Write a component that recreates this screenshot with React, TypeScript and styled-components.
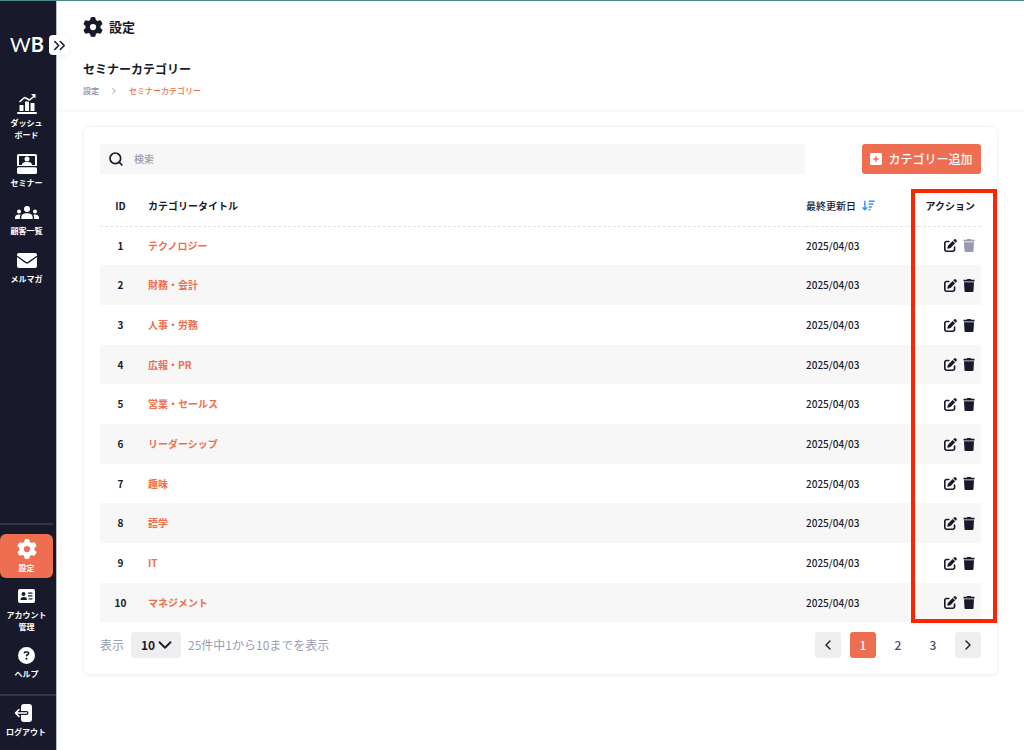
import React from "react";
import styled, { createGlobalStyle, css } from "styled-components";
import { ChevronDown, ChevronLeft, ChevronRight, ChevronsRight, Search } from "lucide-react";
import {
  FaArrowDownWideShort,
  FaCircleQuestion,
  FaGear,
  FaPenToSquare,
} from "react-icons/fa6";

const navy = "#181a2c";
const coral = "#ed6e50";
const muted = "#9a9db3";
const panel = "#f7f7f7";

const GlobalStyle = createGlobalStyle`
  *, *::before, *::after { box-sizing: border-box; }
  body {
    margin: 0;
    background: #fff;
    color: ${navy};
    font-family: "Noto Sans CJK JP", sans-serif;
    font-size: 10px;
    line-height: 12px;
  }
  button, input, select { font: inherit; color: inherit; border: 0; margin: 0; }
  button { cursor: pointer; padding: 0; }
  a { color: inherit; text-decoration: none; }
  h1, h2, ul, ol { margin: 0; padding: 0; list-style: none; }
  svg { display: block; flex: none; }
`;

const Shell = styled.div`
  display: flex;
  min-height: 100vh;
  border-top: 1px solid #4f8a8c;
`;

const Sidebar = styled.aside`
  position: relative;
  display: flex;
  flex-direction: column;
  width: 57px;
  flex: none;
  background: ${navy};
  border-right: 1px solid #b9bcc6;
  color: #fff;
`;

const Logo = styled.a`
  display: block;
  margin: 31px 0 0 10px;
  font: 400 20px/24px Lato, sans-serif;
  b { font-weight: 700; }
`;

const Expand = styled.button`
  position: absolute;
  top: 34px;
  left: 49px;
  display: grid;
  place-items: center;
  width: 20px;
  height: 20px;
  border-radius: 4px;
  background: #fff;
  color: ${navy};
  box-shadow: 0 1px 4px rgba(24, 26, 44, 0.08);
`;

const NavList = styled.ul`
  display: flex;
  flex-direction: column;
  width: 53px;
`;

const MainNav = styled(NavList)`
  gap: 4px;
  margin-top: 33px;
`;

const LowerNav = styled(NavList)`
  gap: 3px;
  margin-top: auto;
  padding: 9px 0 10px;
  border-top: 2px solid #31344a;
`;

const LogoutArea = styled.div`
  border-top: 2px solid #31344a;
  padding: 2px 4px 8px 0;
`;

const NavLink = styled.a<{ $active?: boolean }>`
  display: flex;
  flex-direction: column;
  align-items: center;
  gap: 2px;
  padding: 4px 0;
  border-radius: 6px;
  font-size: 8px;
  font-weight: 700;
  text-align: center;
  white-space: pre-line;
  ${(p) => p.$active && css` background: ${coral}; `}
`;

const NavIcon = styled.span`
  display: grid;
  place-items: center;
  height: 22px;
`;

const Content = styled.div`
  flex: 1;
  min-width: 0;
`;

const Header = styled.header`
  padding: 16px 26px 13px;
  box-shadow: 0 1px 3px rgba(0, 0, 0, 0.06);
`;

const PageTitle = styled.h1`
  display: flex;
  align-items: center;
  gap: 6px;
  font-size: 13px;
  line-height: 20px;
`;

const SectionTitle = styled.h2`
  margin-top: 24px;
  font-size: 12px;
  line-height: 16px;
`;

const Crumbs = styled.ol`
  display: flex;
  align-items: center;
  gap: 10px;
  margin-top: 8px;
  font-size: 8px;
  font-weight: 500;
  line-height: 12px;
  color: #8688a0;
  [aria-current] { color: ${coral}; }
`;

const Card = styled.main`
  margin: 16px 26px 24px;
  padding: 17px 16px 16px;
  border: 1px solid #f3f3f3;
  border-radius: 6px;
  box-shadow: 0 1px 3px rgba(0, 0, 0, 0.06);
`;

const Toolbar = styled.div`
  display: flex;
  justify-content: space-between;
  gap: 57px;
`;

const SearchBox = styled.label`
  display: flex;
  align-items: center;
  flex: 1;
  gap: 10px;
  height: 30px;
  padding: 0 8px;
  background: ${panel};
  border-radius: 2px;
  input {
    flex: 1;
    min-width: 0;
    padding: 0;
    background: none;
    outline: 0;
    font-weight: 500;
  }
  input::placeholder { color: ${muted}; opacity: 1; }
`;

const AddButton = styled.button`
  display: flex;
  align-items: center;
  justify-content: center;
  gap: 6px;
  width: 119px;
  height: 30px;
  border-radius: 3px;
  background: ${coral};
  color: #fff;
  font-size: 12px;
  font-weight: 500;
`;

const TableWrap = styled.div`
  position: relative;
`;

const Table = styled.table`
  width: 100%;
  margin-top: 12px;
  border-collapse: collapse;
  table-layout: fixed;
  th, td { height: 40px; padding: 0; text-align: left; font-weight: 700; }
  th { border-bottom: 1px dashed #e4e4e4; }
  tbody tr:nth-child(3n + 1) td { height: 39px; }
  tbody tr:nth-child(even) { background: ${panel}; }
`;

const IdCol = styled.col` width: 48px; `;
const DateCol = styled.col` width: 112px; `;
const ActionCol = styled.col` width: 63px; `;

const IdCell = styled.td`
  && { padding-right: 7px; text-align: center; }
`;

const DateCell = styled.td`
  && { font-weight: 500; }
`;

const ActionHead = styled.th`
  && { padding-right: 6px; text-align: right; }
`;

const TitleLink = styled.a`
  color: ${coral};
`;

const SortButton = styled.button`
  display: flex;
  align-items: center;
  gap: 6px;
  background: none;
  font-weight: 500;
  svg { color: #2f94f5; }
`;

const Actions = styled.div`
  display: flex;
  align-items: center;
  justify-content: flex-end;
  gap: 6px;
  padding-right: 6px;
`;

const IconButton = styled.button`
  background: none;
  color: ${navy};
  &:disabled { color: #989bb0; }
`;

const Highlight = styled.div`
  position: absolute;
  top: 3px;
  right: -16px;
  bottom: -1px;
  width: 86px;
  border: 4px solid #ff2400;
  pointer-events: none;
`;

const Footer = styled.footer`
  display: flex;
  align-items: center;
  gap: 7px;
  margin-top: 10px;
  color: ${muted};
  font-size: 12px;
`;

const SizePicker = styled.span`
  display: grid;
  align-items: center;
  width: 50px;
  height: 26px;
  background: #eee;
  border-radius: 3px;
  color: ${navy};
  select, svg { grid-area: 1 / 1; }
  select {
    width: 100%;
    height: 26px;
    padding: 0 0 0 10px;
    appearance: none;
    background: none;
    font-weight: 700;
  }
  svg { justify-self: end; margin-right: 5px; pointer-events: none; }
`;

const Pager = styled.nav`
  display: flex;
  gap: 9px;
  margin-left: auto;
`;

const PageButton = styled.button<{ $kind?: "current" | "arrow" }>`
  display: grid;
  place-items: center;
  width: 26px;
  height: 26px;
  border-radius: 3px;
  font-size: 12px;
  font-weight: 500;
  background: ${(p) => (p.$kind === "current" ? coral : p.$kind === "arrow" ? "#eee" : "none")};
  color: ${(p) => (p.$kind === "current" ? "#fff" : p.$kind === "arrow" ? navy : "#4a4d66")};
`;

const ChartIcon = () => (
  <svg width="20" height="20" viewBox="0 0 20 20" fill="currentColor">
    <rect x="0" y="18" width="20" height="2" rx="1" />
    <rect x="2.500" y="11" width="4" height="6" rx=".5" />
    <rect x="8" y="7.500" width="4" height="9.500" rx=".5" />
    <rect x="13.500" y="9" width="4" height="8" rx=".5" />
    <path d="M2.500 8l5-4.500 5 2.500 5-4" fill="none" stroke="currentColor" strokeWidth="1.600" strokeLinejoin="round" />
    <path d="M14 0h4.500v4.500z" />
  </svg>
);

const SeminarIcon = () => (
  <svg width="20" height="20" viewBox="0 0 20 20" fill="currentColor">
    <path d="M1.500 0h17A1.500 1.500 0 0 1 20 1.500V12H0V1.500A1.500 1.500 0 0 1 1.500 0zM2 2v9h3c0-2 2-3 5-3s5 1 5 3h3V2z" fillRule="evenodd" />
    <circle cx="10" cy="5" r="2.500" />
    <path d="M5 12c0-3 2-4 5-4s5 1 5 4zM1.500 13.300h17A1.500 1.500 0 0 1 20 14.800v3.700a1.500 1.500 0 0 1-1.500 1.500h-17A1.500 1.500 0 0 1 0 18.500v-3.700a1.500 1.500 0 0 1 1.500-1.500z" />
  </svg>
);

const UsersIcon = () => (
  <svg width="24" height="13" viewBox="0 0 24 13" fill="currentColor">
    <circle cx="12" cy="3" r="3" />
    <circle cx="4" cy="5.500" r="2" />
    <circle cx="20" cy="5.500" r="2" />
    <path d="M6.300 13v-1.500C6.300 8.500 9 7.300 12 7.300s5.700 1.200 5.700 4.200V13zM0 13v-1.200c0-2.200 1.800-3.300 4-3.300.7 0 1.200.1 1.700.3-.5.800-.8 1.700-.8 2.700V13zM24 13v-1.200c0-2.200-1.800-3.300-4-3.300-.7 0-1.200.1-1.700.3.500.8.8 1.700.8 2.700V13z" />
  </svg>
);

const MailIcon = () => (
  <svg width="20" height="15" viewBox="0 0 20 15">
    <rect width="20" height="15" rx="2" fill="currentColor" />
    <path d="M0 3.200l8.600 6.200a2.400 2.400 0 0 0 2.800 0L20 3.200" fill="none" stroke={navy} strokeWidth="1.300" />
  </svg>
);

const AccountIcon = () => (
  <svg width="17" height="14" viewBox="0 0 17 14" fill="currentColor">
    <path
      fillRule="evenodd"
      d="M2 0h13a2 2 0 0 1 2 2v10a2 2 0 0 1-2 2H2a2 2 0 0 1-2-2V2a2 2 0 0 1 2-2zM5.500 3a2 2 0 1 0 0 4 2 2 0 0 0 0-4zM2.500 11h6.500c0-2-1-3-3.250-3S2.500 9 2.500 11zM10 3.500v1.300h4.500V3.500zM10 6.300v1.300h4.500V6.300zM10.500 9.200v1.300h4V9.200z"
    />
  </svg>
);

const LogoutIcon = () => (
  <svg width="24" height="18" viewBox="0 0 24 18" fill="none">
    <rect x="7" y="0" width="11" height="18" rx="3" fill="currentColor" />
    <path d="M5 5.500L1.500 9 5 12.500M2 9h10.500" stroke={navy} strokeWidth="4" strokeLinecap="round" />
    <path d="M5 5.500L1.500 9 5 12.500M2 9h10.500" stroke="currentColor" strokeWidth="1.600" strokeLinecap="round" strokeLinejoin="round" />
  </svg>
);

const PlusIcon = () => (
  <svg width="12" height="12" viewBox="0 0 12 12">
    <rect width="12" height="12" rx="1.500" fill="currentColor" />
    <path d="M6 3.300v5.400M3.300 6h5.400" stroke={coral} strokeWidth="1.400" />
  </svg>
);

const TrashIcon = () => (
  <svg width="12" height="13" viewBox="0 0 12 13" fill="currentColor">
    <path d="M.5.800h3.200L4.300 0h3.400l.6.800h3.200v1.700H.5zM1 3.300h10l-.5 8.700a1 1 0 0 1-1 1h-7a1 1 0 0 1-1-1z" />
  </svg>
);

const mainItems = [
  { label: "ダッシュ\nボード", icon: <ChartIcon /> },
  { label: "セミナー", icon: <SeminarIcon /> },
  { label: "顧客一覧", icon: <UsersIcon /> },
  { label: "メルマガ", icon: <MailIcon /> },
];

const lowerItems = [
  { label: "設定", icon: <FaGear size={20} />, active: true },
  { label: "アカウント\n管理", icon: <AccountIcon /> },
  { label: "ヘルプ", icon: <FaCircleQuestion size={17} /> },
];

const categories = [
  "テクノロジー",
  "財務・会計",
  "人事・労務",
  "広報・PR",
  "営業・セールス",
  "リーダーシップ",
  "趣味",
  "語学",
  "IT",
  "マネジメント",
];

export default function App() {
  return (
    <>
      <GlobalStyle />
      <Shell>
        <Sidebar>
          <Logo href="#">W<b>B</b></Logo>
          <Expand aria-label="メニューを開く"><ChevronsRight size={19} /></Expand>
          <MainNav>
            {mainItems.map((item) => (
              <li key={item.label}>
                <NavLink href="#"><NavIcon>{item.icon}</NavIcon>{item.label}</NavLink>
              </li>
            ))}
          </MainNav>
          <LowerNav>
            {lowerItems.map((item) => (
              <li key={item.label}>
                <NavLink href="#" $active={item.active}><NavIcon>{item.icon}</NavIcon>{item.label}</NavLink>
              </li>
            ))}
          </LowerNav>
          <LogoutArea>
            <NavLink href="#"><NavIcon><LogoutIcon /></NavIcon>ログアウト</NavLink>
          </LogoutArea>
        </Sidebar>
        <Content>
          <Header>
            <PageTitle><FaGear size={20} />設定</PageTitle>
            <SectionTitle>セミナーカテゴリー</SectionTitle>
            <Crumbs>
              <li><a href="#">設定</a></li>
              <li aria-hidden="true"><ChevronRight size={10} /></li>
              <li aria-current="page">セミナーカテゴリー</li>
            </Crumbs>
          </Header>
          <Card>
            <Toolbar>
              <SearchBox>
                <Search size={16} strokeWidth={2.5} />
                <input type="search" placeholder="検索" aria-label="検索" />
              </SearchBox>
              <AddButton><PlusIcon />カテゴリー追加</AddButton>
            </Toolbar>
            <TableWrap>
              <Table>
                <colgroup><IdCol /><col /><DateCol /><ActionCol /></colgroup>
                <thead>
                  <tr>
                    <IdCell as="th">ID</IdCell>
                    <th>カテゴリータイトル</th>
                    <th><SortButton>最終更新日<FaArrowDownWideShort size={13} /></SortButton></th>
                    <ActionHead>アクション</ActionHead>
                  </tr>
                </thead>
                <tbody>
                  {categories.map((name, i) => (
                    <tr key={name}>
                      <IdCell>{i + 1}</IdCell>
                      <td><TitleLink href="#">{name}</TitleLink></td>
                      <DateCell>2025/04/03</DateCell>
                      <td>
                        <Actions>
                          <IconButton aria-label={`${name}を編集`}><FaPenToSquare size={13} /></IconButton>
                          <IconButton aria-label={`${name}を削除`} disabled={i === 0}><TrashIcon /></IconButton>
                        </Actions>
                      </td>
                    </tr>
                  ))}
                </tbody>
              </Table>
              <Highlight />
            </TableWrap>
            <Footer>
              <label htmlFor="page-size">表示</label>
              <SizePicker>
                <select id="page-size" defaultValue="10">
                  <option>10</option>
                  <option>25</option>
                </select>
                <ChevronDown size={22} />
              </SizePicker>
              <span>25件中1から10までを表示</span>
              <Pager aria-label="ページ">
                <PageButton $kind="arrow" aria-label="前へ"><ChevronLeft size={16} /></PageButton>
                <PageButton $kind="current" aria-current="page">1</PageButton>
                <PageButton>2</PageButton>
                <PageButton>3</PageButton>
                <PageButton $kind="arrow" aria-label="次へ"><ChevronRight size={16} /></PageButton>
              </Pager>
            </Footer>
          </Card>
        </Content>
      </Shell>
    </>
  );
}
